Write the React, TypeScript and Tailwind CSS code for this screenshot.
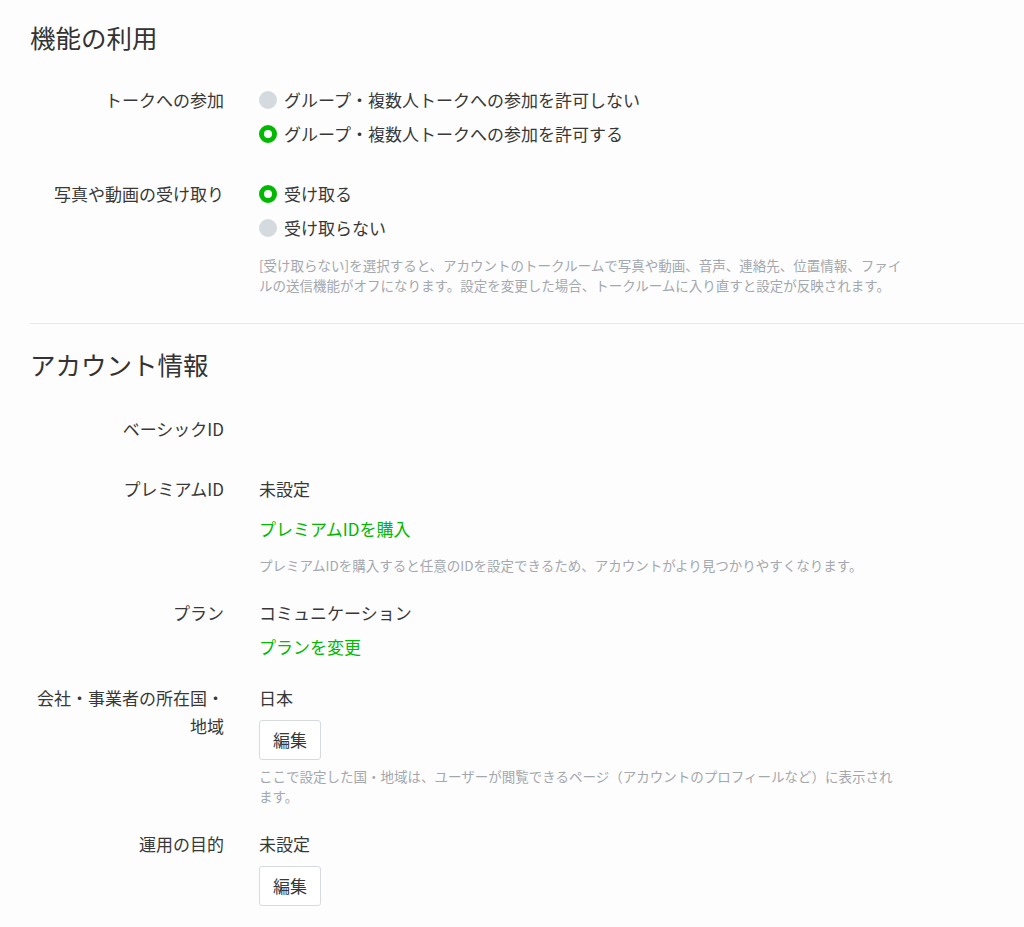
import React from 'react';

const LABEL = 'w-[194px] shrink-0 text-right text-[17px] leading-[24px] text-[#383838]';
const VALUE = 'text-[17px] leading-[24px] text-[#383838]';
const HELP = 'w-[644px] text-[13.5px] leading-[20px] text-[#a3a8ae]';
const LINK = 'text-[17px] leading-[24px] text-[#00b900]';

function Row({ label, className = '', labelClass = '', children }: { label: React.ReactNode; className?: string; labelClass?: string; children?: React.ReactNode }) {
  return (
    <div className={`flex gap-[35px] ${className}`}>
      <div className={`${LABEL} ${labelClass}`}>{label}</div>
      <div className="flex-1 min-w-0">{children}</div>
    </div>
  );
}

function Radio({ checked, label }: { checked?: boolean; label: string }) {
  return (
    <label className="flex items-center gap-[7px] cursor-pointer">
      {checked ? (
        <span className="w-[18px] h-[18px] rounded-full border-[5px] border-[#00b900] bg-white shrink-0" />
      ) : (
        <span className="w-[18px] h-[18px] rounded-full bg-[#d5dade] shrink-0" />
      )}
      <span className={VALUE}>{label}</span>
    </label>
  );
}

function EditButton() {
  return (
    <button className="h-[40px] w-[62px] rounded-[3px] border border-[#d8dbde] bg-white text-[17px] text-[#383838]">
      編集
    </button>
  );
}

export default function App() {
  return (
    <div className="min-h-screen bg-[#fdfdfd] font-['Noto_Sans_CJK_JP','Noto_Sans',sans-serif]">
      <section className="pl-[30px] pt-[19px] pb-[28px]">
        <h2 className="text-[25.5px] leading-[36px] text-[#333]">機能の利用</h2>

        <Row label="トークへの参加" className="mt-[33px]">
          <div className="flex flex-col gap-[10px]">
            <Radio label="グループ・複数人トークへの参加を許可しない" />
            <Radio checked label="グループ・複数人トークへの参加を許可する" />
          </div>
        </Row>

        <Row label="写真や動画の受け取り" className="mt-[36px]">
          <div className="flex flex-col gap-[10px]">
            <Radio checked label="受け取る" />
            <Radio label="受け取らない" />
          </div>
          <p className={`${HELP} mt-[15px]`}>
            [受け取らない]を選択すると、アカウントのトークルームで写真や動画、音声、連絡先、位置情報、ファイルの送信機能がオフになります。設定を変更した場合、トークルームに入り直すと設定が反映されます。
          </p>
        </Row>
      </section>

      <div className="ml-[30px] h-px bg-[#e8e8e8]" />

      <section className="pl-[30px] pt-[22px] pb-[20px]">
        <h2 className="text-[25.5px] leading-[36px] text-[#333]">アカウント情報</h2>

        <Row label="ベーシックID" className="mt-[35px]">
          <div className="h-[24px]" />
        </Row>

        <Row label="プレミアムID" className="mt-[36px]">
          <div className={VALUE}>未設定</div>
          <a className={`${LINK} block mt-[16px]`}>プレミアムIDを購入</a>
          <p className={`${HELP} mt-[14px]`}>
            プレミアムIDを購入すると任意のIDを設定できるため、アカウントがより見つかりやすくなります。
          </p>
        </Row>

        <Row label="プラン" className="mt-[26px]">
          <div className={VALUE}>コミュニケーション</div>
          <a className={`${LINK} block mt-[10px]`}>プランを変更</a>
        </Row>

        <Row label="会社・事業者の所在国・地域" labelClass="leading-[28px] -mt-[2px]" className="mt-[27px]">
          <div className={VALUE}>日本</div>
          <div className="mt-[10px]">
            <EditButton />
          </div>
          <p className={`${HELP} mt-[6px]`}>
            ここで設定した国・地域は、ユーザーが閲覧できるページ（アカウントのプロフィールなど）に表示されます。
          </p>
        </Row>

        <Row label="運用の目的" className="mt-[26px]">
          <div className={VALUE}>未設定</div>
          <div className="mt-[10px]">
            <EditButton />
          </div>
        </Row>
      </section>
    </div>
  );
}
